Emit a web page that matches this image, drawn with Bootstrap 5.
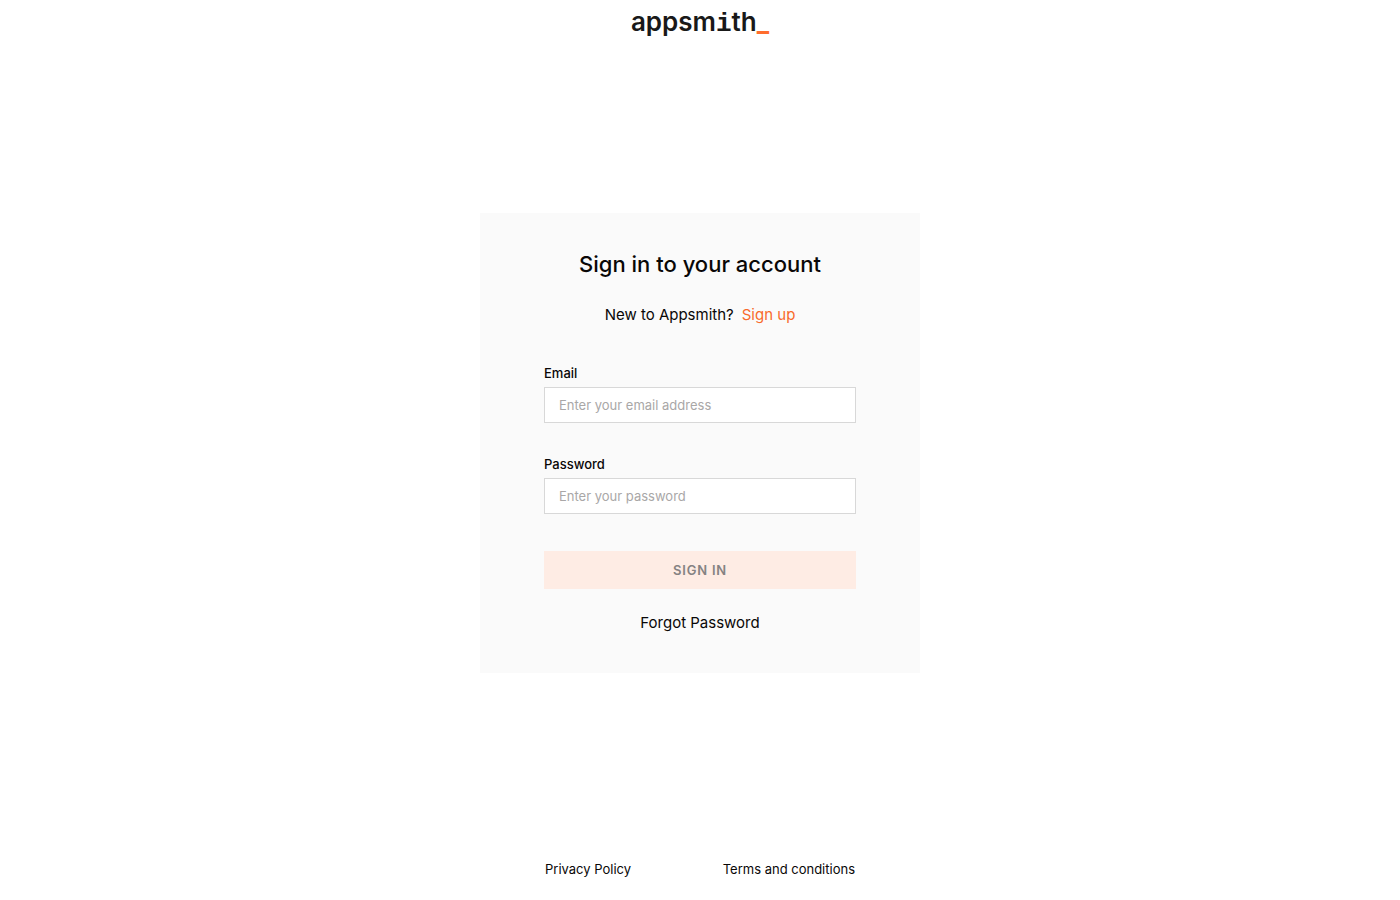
<!DOCTYPE html>
<html lang="en">
<head>
<meta charset="utf-8">
<meta name="viewport" content="width=device-width, initial-scale=1">
<title>Sign in | Appsmith</title>
<link href="https://cdn.jsdelivr.net/npm/bootstrap@5.3.0/dist/css/bootstrap.min.css" rel="stylesheet">
<style>
  body { font-family: Inter, "Liberation Sans", sans-serif; font-size: 13px; line-height: 20px; color: #090707; }
  .brand { font-size: 26px; line-height: 44px; height: 44px; font-weight: 600; color: #191919; }
  .brand-slab { font-family: "Liberation Mono", monospace; font-weight: 700; line-height: 1; }
  .brand-mark { color: #ff6d2d; font-weight: 700; }
  .auth-box { width: 100%; max-width: 440px; padding: 36px 64px 38px; background: #fafafa; }
  .auth-title { font-size: 22px; line-height: 30px; font-weight: 500; }
  .lede { font-size: 15px; line-height: 24px; }
  .accent { color: #f86a2b; }
  .auth-form { padding: 36px 0 22px; }
  .form-label { font-weight: 500; line-height: 20px; margin-bottom: 4px; }
  .field { height: 36px; padding: 0 14px; border: 1px solid #d8d8d8; border-radius: 0; font-size: 13px; }
  .field::placeholder { color: #a9a7a7; }
  .field-gap { margin-bottom: 31px; }
  .submit { height: 38px; margin-top: 6px; border: 0; border-radius: 0; padding: 2px 0 0; font-size: 13px; font-weight: 600; letter-spacing: 0.8px; --bs-btn-disabled-bg: #feece4; --bs-btn-disabled-color: #858282; --bs-btn-disabled-opacity: 1; }
  .legal { width: 100%; max-width: 310px; padding: 17px 0 21px; }
</style>
</head>
<body class="d-flex flex-column align-items-center min-vh-100 bg-white">
  <header class="brand">appsm<span class="brand-slab">i</span>th<span class="brand-mark">_</span></header>
  <main class="flex-grow-1 d-flex align-items-center justify-content-center w-100">
    <section class="auth-box">
      <h1 class="auth-title text-center mb-0">Sign in to your account</h1>
      <p class="lede d-flex justify-content-center gap-2 mt-4 mb-0"><span>New to Appsmith?</span><a class="accent text-decoration-none" href="#signup">Sign up</a></p>
      <form class="auth-form d-flex flex-column">
        <div class="field-gap">
          <label class="form-label d-block" for="email">Email</label>
          <input class="form-control field" id="email" type="email" placeholder="Enter your email address">
        </div>
        <div class="field-gap">
          <label class="form-label d-block" for="password">Password</label>
          <input class="form-control field" id="password" type="password" placeholder="Enter your password">
        </div>
        <button class="btn submit w-100" type="submit" disabled>SIGN IN</button>
      </form>
      <p class="lede text-center mb-0"><a class="text-reset text-decoration-none" href="#forgot">Forgot Password</a></p>
    </section>
  </main>
  <footer class="legal d-flex justify-content-between">
    <a class="text-reset text-decoration-none" href="#privacy">Privacy Policy</a>
    <a class="text-reset text-decoration-none" href="#terms">Terms and conditions</a>
  </footer>
<script src="https://cdn.jsdelivr.net/npm/bootstrap@5.3.0/dist/js/bootstrap.bundle.min.js"></script>
</body>
</html>
